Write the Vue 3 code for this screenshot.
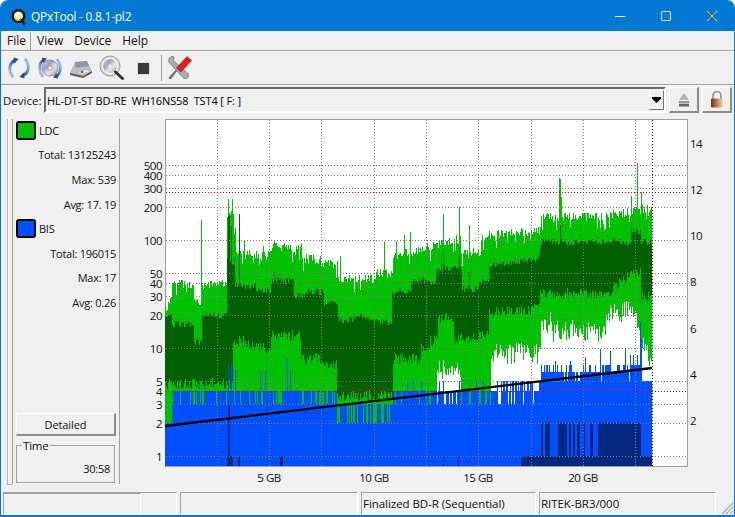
<template>
  <div class="window">
    <div class="titlebar">
      <svg class="app-icon" width="16" height="18" viewBox="0 0 16 18">
        <circle cx="7.5" cy="8" r="7" fill="#111" />
        <circle cx="7.5" cy="8" r="4.6" fill="#f4e8b0" />
        <circle cx="6" cy="6.5" r="2" fill="#fff" />
        <path d="M9 11l5 5.5" stroke="#111" stroke-width="2.4" />
        <path d="M4 11a4 4 0 0 0 6 .5" stroke="#e0a020" stroke-width="1.4" fill="none" />
      </svg>
      <span class="title">QPxTool - 0.8.1-pl2</span>
      <div class="win-buttons">
        <svg width="46" height="30" viewBox="0 0 46 30"><path d="M18 15.5h10" stroke="#fff" /></svg>
        <svg width="46" height="30" viewBox="0 0 46 30"><rect x="18.5" y="10.5" width="9" height="9" rx="1" fill="none" stroke="#fff" /></svg>
        <svg width="46" height="30" viewBox="0 0 46 30"><path d="M18 10l10 10M28 10L18 20" stroke="#fff" /></svg>
      </div>
    </div>

    <div class="menubar">
      <span v-for="(item, i) in menu" :key="item" class="menu-item" :class="{ active: i === 0 }">{{ item }}</span>
    </div>

    <div class="toolbar">
      <!-- refresh -->
      <svg class="tool" width="26" height="26" viewBox="0 0 26 26">
        <defs>
          <linearGradient id="arcA" x1="0.8" y1="0" x2="0.2" y2="1">
            <stop offset="0" stop-color="#1d4f9c" />
            <stop offset="1" stop-color="#b9d4ee" />
          </linearGradient>
          <linearGradient id="arcB" x1="0.2" y1="1" x2="0.8" y2="0">
            <stop offset="0" stop-color="#1d4f9c" />
            <stop offset="1" stop-color="#b9d4ee" />
          </linearGradient>
        </defs>
        <path d="M9 5.500C3 8 1.500 16 7 22.500" fill="none" stroke="url(#arcA)" stroke-width="3" />
        <path d="M7.500 2.500l5 1.500-4 4.500z" fill="#1d4f9c" />
        <path d="M17 20.500C23 18 24.500 10 19 3.500" fill="none" stroke="url(#arcB)" stroke-width="3" />
        <path d="M18.500 23.500l-5-1.500 4-4.500z" fill="#1d4f9c" />
      </svg>
      <!-- disc with arrows -->
      <svg class="tool" width="26" height="26" viewBox="0 0 26 26">
        <defs>
          <linearGradient id="discG" x1="0" y1="0" x2="1" y2="1">
            <stop offset="0" stop-color="#d8d8d8" />
            <stop offset="0.35" stop-color="#a99cc4" />
            <stop offset="0.6" stop-color="#e6e6e6" />
            <stop offset="1" stop-color="#8f8f8f" />
          </linearGradient>
        </defs>
        <circle cx="13" cy="13" r="8" fill="url(#discG)" stroke="#777" stroke-width="0.6" />
        <circle cx="13" cy="13" r="2.2" fill="#f4f4f4" stroke="#666" stroke-width="0.6" />
        <path d="M7 4.500C1.500 8 1 16 6 22" fill="none" stroke="url(#arcA)" stroke-width="2.800" />
        <path d="M5 2.500l5 1-3.500 4.500z" fill="#1d4f9c" />
        <path d="M19 21.500C24.500 18 25 10 20 4" fill="none" stroke="url(#arcB)" stroke-width="2.800" />
        <path d="M21 23.500l-5-1 3.500-4.500z" fill="#1d4f9c" />
      </svg>
      <!-- drive -->
      <svg class="tool" width="26" height="26" viewBox="0 0 26 26">
        <path d="M2 18l5-11 12-1 5 10-9 5z" fill="#b9bcc0" />
        <path d="M7 7l12-1 2 5-13 2z" fill="#8d97a8" />
        <path d="M2 18l13 3 9-5v2l-9 5-13-3z" fill="#56585c" />
        <path d="M10 17l9-2 3 1-8 3z" fill="#e8e8e8" />
        <circle cx="14" cy="17" r="1.300" fill="#666" />
      </svg>
      <!-- scan -->
      <svg class="tool" width="26" height="26" viewBox="0 0 26 26">
        <circle cx="11" cy="11" r="10" fill="#d8d8d8" stroke="#a0a0a0" stroke-width="1" />
        <circle cx="11" cy="11" r="7.500" fill="url(#discG)" stroke="#fff" stroke-width="1" />
        <path d="M7.500 7a5 5 0 0 1 4-1l-1 4z" fill="#7fc4a0" />
        <circle cx="11" cy="11" r="1.600" fill="#eee" />
        <path d="M16.500 17l7 6.500" stroke="#333" stroke-width="3" stroke-linecap="round" />
      </svg>
      <!-- stop -->
      <span class="stop-wrap"><span class="stop"></span></span>
      <span class="tool-sep"></span>
      <!-- tools -->
      <svg class="tool" width="26" height="27" viewBox="0 0 26 27">
        <path d="M5 1.500C2 2 1 5 2 7.500L16 22.500c1 1.500 4 1.500 5 0s1-3.500-.5-4.500L6.500 5.500 7 2z" fill="#a8adb2" stroke="#6a6e72" stroke-width="0.700" />
        <path d="M20 1.500l4.500 4-10.500 11.500-4.500-4z" fill="#e02020" stroke="#9a1010" stroke-width="0.600" />
        <path d="M10.500 15.500L4.500 23.500l-1.500 1-1.500-1.500 1-1.500 6.500-7z" fill="#70757a" />
      </svg>
    </div>

    <div class="device-row">
      <label class="device-label">Device:</label>
      <div class="combo">
        <span class="combo-text">HL-DT-ST BD-RE&nbsp; WH16NS58&nbsp; TST4 [ F: ]</span>
        <span class="combo-btn"><svg width="9" height="6" viewBox="0 0 9 6"><path d="M0 0h9v1.500L4.500 6 0 1.500z" fill="#000" /></svg></span>
      </div>
      <button class="square-btn">
        <svg width="12" height="14" viewBox="0 0 12 14">
          <path d="M6 0l5 7H1z" fill="#b4b4b4" />
          <rect x="1" y="8" width="10" height="2.500" fill="#999" />
          <rect x="1" y="11" width="10" height="2.500" fill="#666" />
        </svg>
      </button>
      <button class="square-btn">
        <svg width="14" height="17" viewBox="0 0 14 17">
          <defs>
            <linearGradient id="lockG" x1="0" y1="0" x2="1" y2="0">
              <stop offset="0" stop-color="#7a2c1c" />
              <stop offset="0.5" stop-color="#b5835a" />
              <stop offset="1" stop-color="#ecd9b8" />
            </linearGradient>
          </defs>
          <path d="M3 8V4.500a4 4 0 0 1 8 0V8" fill="none" stroke="#9a9a9a" stroke-width="1.800" />
          <rect x="1" y="7.500" width="12" height="9" rx="1" fill="url(#lockG)" />
        </svg>
      </button>
    </div>

    <div class="main">
      <div class="rail"></div>
      <div class="panel">
        <template v-for="group in stats" :key="group.name">
          <div class="stat-row legend-row">
            <span class="swatch" :class="group.cls"></span>
            <span>{{ group.name }}</span>
          </div>
          <div v-for="row in group.rows" :key="row" class="stat-row value-row">{{ row }}</div>
        </template>
        <button class="detailed">Detailed</button>
        <fieldset class="time-box">
          <legend>Time</legend>
          <div class="time-value">30:58</div>
        </fieldset>
      </div>

      <svg class="chart" width="614" height="367" viewBox="120 120 614 367">
        <rect x="165.500" y="120.500" width="522" height="347" fill="#fff" stroke="#a0a0a0" />
        <g shape-rendering="crispEdges" fill="none" stroke-width="1">
          <path :d="paths.light" stroke="#00c000" />
          <path :d="paths.dark" stroke="#006000" />
          <path :d="paths.blue" stroke="#0050ff" />
          <path :d="paths.navy" stroke="#002880" />
          <path v-for="y in gridY" :key="'h' + y" :d="`M166 ${y}.5H687`" stroke="#808080" stroke-dasharray="1 2" />
          <path v-for="x in gridX" :key="'v' + x" :d="`M${x}.5 121V467`" stroke="#808080" stroke-dasharray="1 2" />
          <path d="M166 193.500H687M166 392.500H687" stroke="#e00000" stroke-dasharray="1 2" />
          <path d="M652.500 121V467" stroke="#000" stroke-dasharray="1 2" />
        </g>
        <path d="M165 427L652 369" stroke="#000" stroke-width="2.400" fill="none" />
        <g class="axis">
          <text v-for="t in leftTicks" :key="t.label" x="162" :y="t.y + 5" text-anchor="end">{{ t.label }}</text>
          <text v-for="t in rightTicks" :key="t.label" x="690" :y="t.y + 5">{{ t.label }}</text>
          <text v-for="t in bottomTicks" :key="t.label" :x="t.x" y="483" text-anchor="middle">{{ t.label }}</text>
        </g>
      </svg>
    </div>

    <div class="statusbar">
      <div class="cell first"><span class="progress"></span></div>
      <div class="cell"></div>
      <div class="cell">Finalized BD-R (Sequential)</div>
      <div class="cell">RITEK-BR3/000</div>
      <svg class="grip" width="14" height="14" viewBox="0 0 14 14">
        <path d="M13 2L2 13M13 6L6 13M13 10L10 13" stroke="#a8a8a8" stroke-width="1.200" />
      </svg>
    </div>
  </div>
</template>

<script setup>
const menu = ['File', 'View', 'Device', 'Help']

const stats = [
  { name: 'LDC', cls: 'green', rows: ['Total: 13125243', 'Max: 539', 'Avg: 17. 19'] },
  { name: 'BIS', cls: 'blue', rows: ['Total: 196015', 'Max: 17', 'Avg: 0.26'] }
]

// log scale of the left axis, 108px per decade
const logY = (v) => Math.round(457 - 108 * Math.log10(v))

const gridValues = [1, 2, 3, 4, 5, 10, 20, 30, 40, 50, 100, 200, 300, 400, 500]
const gridY = gridValues.map(logY)
const gridX = [217, 269, 321, 374, 426, 478, 531, 583, 635]
const leftTicks = gridValues.map((v) => ({ label: String(v), y: logY(v) }))
const rightTicks = [14, 12, 10, 8, 6, 4, 2].map((v, i) => ({ label: String(v), y: [144, 190, 236, 282, 329, 375, 421][i] }))
const bottomTicks = [
  { label: '5 GB', x: 269 },
  { label: '10 GB', x: 374 },
  { label: '15 GB', x: 478 },
  { label: '20 GB', x: 583 }
]

// small seeded generator so the scan looks the same on every load
let seed = 20240611
const rnd = () => {
  seed = (seed + 0x6d2b79f5) | 0
  let t = Math.imul(seed ^ (seed >>> 15), 1 | seed)
  t = (t + Math.imul(t ^ (t >>> 7), 61 | t)) ^ t
  return ((t ^ (t >>> 14)) >>> 0) / 4294967296
}

const lerp = (pts, x) => {
  for (let i = 1; i < pts.length; i++) {
    if (x <= pts[i][0]) {
      const [x0, y0] = pts[i - 1]
      const [x1, y1] = pts[i]
      return y0 + ((y1 - y0) * (x - x0)) / (x1 - x0 || 1)
    }
  }
  return pts[pts.length - 1][1]
}

const topEdge = [[165, 310], [171, 300], [172, 284], [193, 285], [194, 298], [200, 305], [201, 285], [226, 285], [227, 215], [235, 215], [236, 255], [258, 255], [270, 253], [271, 247], [300, 248], [301, 258], [320, 260], [321, 263], [337, 265], [338, 278], [375, 279], [376, 272], [392, 275], [393, 256], [420, 250], [427, 245], [428, 250], [435, 245], [460, 238], [461, 252], [480, 252], [481, 238], [490, 235], [540, 231], [541, 217], [600, 217], [652, 208]]
const darkTop = [[165, 317], [171, 317], [172, 325], [193, 325], [194, 343], [201, 343], [202, 316], [226, 316], [227, 263], [234, 263], [235, 285], [240, 286], [255, 287], [256, 292], [270, 292], [271, 282], [293, 282], [294, 297], [303, 297], [304, 293], [323, 293], [324, 305], [337, 305], [338, 321], [352, 321], [353, 318], [373, 318], [374, 323], [391, 323], [392, 293], [410, 293], [411, 284], [420, 280], [427, 283], [435, 283], [436, 270], [461, 268], [462, 290], [478, 290], [479, 281], [488, 281], [489, 266], [538, 260], [540, 243], [631, 243], [632, 232], [640, 232], [641, 243], [652, 243]]
const darkBottom = [[165, 385], [232, 385], [233, 340], [260, 348], [270, 350], [271, 335], [300, 336], [301, 360], [320, 360], [321, 365], [336, 365], [337, 397], [392, 397], [393, 360], [420, 360], [421, 350], [437, 338], [438, 318], [453, 318], [454, 340], [478, 340], [479, 335], [488, 335], [489, 313], [538, 310], [540, 295], [605, 295], [635, 274], [640, 272], [641, 298], [652, 298]]
const lightBottom = [[165, 470], [436, 470], [437, 365], [460, 365], [461, 470], [490, 470], [491, 350], [540, 350], [541, 319], [552, 319], [553, 328], [605, 328], [606, 308], [635, 308], [640, 340], [652, 358]]

const spikes = { 201: 221, 228: 200, 232: 200, 234: 235, 239: 215, 244: 241, 263: 247, 274: 241, 301: 244, 340: 257, 384: 243, 396: 242, 404: 236, 410: 233, 443: 215, 459: 208, 469: 226, 559: 179, 560: 180, 561: 198, 631: 197, 637: 164, 641: 193 }
const darkSpikes = { 228: 217, 229: 217, 231: 227, 239: 215, 274: 273, 443: 253, 459: 254, 469: 270, 560: 226, 631: 228 }
const blueSpikes = { 228: 365, 231: 366, 235: 370, 260: 372, 265: 372, 287: 360, 290: 372, 640: 323, 641: 340, 600: 350, 610: 352, 625: 350, 585: 358, 570: 362, 555: 362 }

const blueTop = (x) => {
  const r = rnd()
  if (x < 172) return 424
  if (x < 337) return r < 0.78 ? 392 : 405
  if (x < 393) return r < 0.6 ? 405 : 424
  if (x < 500) return r < 0.75 ? 392 : r < 0.92 ? 405 : 382
  if (x < 541) return r < 0.55 ? 382 : r < 0.85 ? 392 : 405
  if (x < 630) return r < 0.55 ? 373 : r < 0.85 ? 366 : 382
  if (x < 640) return r < 0.6 ? 366 : 356
  return 382
}

const navyUpper = [[541, 543], [545, 550], [558, 567], [569, 571], [573, 575], [577, 580], [583, 585], [590, 593], [598, 641]]
const navyLower = [[227, 233], [238, 240], [280, 283], [443, 444], [458, 459], [521, 652]]

const span = (x, a, b) => (b > a ? `M${x}.5 ${Math.round(a)}V${Math.round(b)}` : '')

const paths = { light: '', dark: '', blue: '', navy: '' }
for (let x = 165; x < 652; x++) {
  const blue = Math.min(blueTop(x), blueSpikes[x] || 999)
  // now and then a column falls well short of its neighbours
  const dip = rnd() < 0.07 ? 10 : 0
  const top = spikes[x] || lerp(topEdge, x) + (rnd() - 0.4) * 9 + dip
  const dTop = darkSpikes[x] || lerp(darkTop, x) + (rnd() - 0.5) * 7
  const dBot = lerp(darkBottom, x) + (rnd() - 0.5) * 12
  const lBot = lerp(lightBottom, x) + (rnd() - 0.3) * 22

  paths.light += span(x, top, dTop) + span(x, dBot, Math.min(lBot, blue))
  paths.dark += span(x, dTop, Math.min(dBot, blue))
  paths.blue += span(x, blue, 467)

  if (navyLower.some(([a, b]) => x >= a && x < b)) paths.navy += span(x, 457, 467)
  if (navyUpper.some(([a, b]) => x >= a && x < b)) paths.navy += span(x, 424, 457)
  if (x === 228 || x === 229) paths.navy += span(x, 405, 457)
}
</script>

<style>
html,
body {
  margin: 0;
  background: #fff;
}
</style>

<style scoped>
.window {
  width: 735px;
  height: 517px;
  box-sizing: border-box;
  position: relative;
  display: flex;
  flex-direction: column;
  background: #f0f0f0;
  border: 1px solid #0078d4;
  border-bottom-width: 2px;
  border-radius: 8px 8px 0 0;
  font-family: "Open Sans", "Noto Sans", sans-serif;
  font-size: 11.5px;
  color: #111;
  overflow: hidden;
}

.titlebar {
  height: 30px;
  flex: none;
  display: flex;
  align-items: center;
  background: #0078d4;
  color: #fff;
  padding-left: 10px;
}

.app-icon {
  margin-top: 1px;
}

.title {
  margin-left: 4px;
  font-size: 12px;
  letter-spacing: -0.25px;
}

.win-buttons {
  margin-left: auto;
  margin-right: -1px;
  display: flex;
}

.win-buttons svg {
  display: block;
}

.menubar {
  height: 19px;
  flex: none;
  display: flex;
  padding-left: 1px;
  border-bottom: 1px solid #a0a0a0;
  box-shadow: 0 1px 0 #fff;
}

.menu-item {
  line-height: 19px;
  padding: 0 5px 0 5px;
  margin-right: 1px;
  font-size: 12px;
  box-sizing: border-box;
}

.menu-item.active {
  border-left: 1px solid #fff;
  border-top: 1px solid #fff;
  border-right: 1px solid #a0a0a0;
  line-height: 17px;
  padding: 0 4px;
}

.toolbar {
  height: 32px;
  flex: none;
  margin-top: 1px;
  display: flex;
  align-items: center;
  padding-left: 5px;
  gap: 5px;
  border-bottom: 1px solid #a0a0a0;
  box-sizing: content-box;
  box-shadow: 0 1px 0 #fff;
}

.tool {
  display: block;
}

.stop-wrap {
  width: 26px;
  height: 26px;
  display: flex;
  align-items: center;
  justify-content: center;
}

.stop {
  width: 11px;
  height: 11px;
  background: #3a3a3a;
  box-shadow: 0 0 1px #777;
}

.tool-sep {
  width: 1px;
  height: 26px;
  background: #a0a0a0;
}

.device-row {
  height: 34px;
  flex: none;
  display: flex;
  align-items: center;
  padding: 0 2px 4px 2px;
  box-sizing: border-box;
}

.device-label {
  width: 41px;
  flex: none;
}

.combo {
  width: 622px;
  height: 26px;
  flex: none;
  box-sizing: border-box;
  display: flex;
  align-items: center;
  border-top: 2px solid #6a6a6a;
  border-left: 2px solid #6a6a6a;
  border-right: 2px solid #fff;
  border-bottom: 2px solid #fff;
  padding-left: 1px;
  position: relative;
}

.combo-text {
  font-size: 11px;
  letter-spacing: -0.15px;
  color: #000;
  white-space: nowrap;
}

.combo-btn {
  margin-left: auto;
  width: 15px;
  height: 20px;
  display: flex;
  align-items: center;
  justify-content: center;
  border-left: 1px solid #fff;
  border-top: 1px solid #fff;
  border-right: 1px solid #777;
  border-bottom: 1px solid #777;
  box-sizing: border-box;
}

.square-btn {
  width: 30px;
  height: 26px;
  margin-left: 3px;
  padding: 0;
  flex: none;
  display: flex;
  align-items: center;
  justify-content: center;
  background: #f0f0f0;
  border: none;
  border-top: 1px solid #fff;
  border-left: 1px solid #fff;
  border-right: 2px solid #8a8a8a;
  border-bottom: 2px solid #8a8a8a;
  box-sizing: border-box;
}

.main {
  height: 367px;
  flex: none;
  display: flex;
  padding-left: 6px;
}

.rail {
  width: 4px;
  height: 365px;
  flex: none;
  border-left: 1px solid #b4b4b4;
  border-bottom: 1px solid #b4b4b4;
  box-shadow: inset 1px 0 0 #fff;
}

.panel {
  width: 108px;
  flex: none;
  box-sizing: border-box;
  height: 365px;
  display: flex;
  flex-direction: column;
  padding: 0 3px 0 3px;
  border-left: 1px solid #a0a0a0;
  border-right: 1px solid #a0a0a0;
  font-size: 11px;
  letter-spacing: -0.25px;
}

.stat-row {
  height: 24.6px;
  flex: none;
  display: flex;
  align-items: center;
}

.stat-row:first-child {
  margin-top: -1px;
}

.legend-row {
  gap: 3px;
}

.value-row {
  justify-content: flex-end;
}

.swatch {
  width: 20px;
  height: 19px;
  box-sizing: border-box;
  border: 2px solid #000;
  border-radius: 3px;
}

.swatch.green {
  background: #00c000;
}

.swatch.blue {
  background: #0050ff;
}

.detailed {
  margin-top: auto;
  height: 23px;
  flex: none;
  width: 100px;
  padding: 0;
  font: inherit;
  letter-spacing: -0.1px;
  color: inherit;
  background: #f0f0f0;
  border: none;
  border-top: 1px solid #fff;
  border-left: 1px solid #fff;
  border-right: 2px solid #8a8a8a;
  border-bottom: 2px solid #8a8a8a;
  box-sizing: border-box;
}

.time-box {
  margin: 2px 0 1px;
  padding: 0 4px 0 4px;
  height: 45px;
  width: 99px;
  box-sizing: border-box;
  border: 1px solid #a0a0a0;
  box-shadow: 1px 1px 0 #fff;
}

.time-box legend {
  padding: 0 1px;
  margin-left: 1px;
  font-size: 11.5px;
  line-height: 15px;
  letter-spacing: -0.2px;
}

.time-value {
  text-align: right;
  margin-top: 8px;
}

.chart {
  display: block;
  flex: none;
}

.axis text {
  font-family: "Open Sans", "Noto Sans", sans-serif;
  font-size: 11.5px;
  letter-spacing: -0.5px;
  fill: #111;
}

.statusbar {
  flex: none;
  margin-top: 6px;
  height: 22px;
  display: grid;
  grid-template-columns: 174px 178px 175px 177px;
  gap: 3px;
  padding-left: 2px;
}

.cell {
  box-sizing: border-box;
  border-top: 1px solid #a0a0a0;
  border-left: 1px solid #a0a0a0;
  border-right: 1px solid #fff;
  border-bottom: 1px solid #fff;
  padding-left: 1px;
  line-height: 21px;
  white-space: nowrap;
  letter-spacing: -0.05px;
}

.cell.first {
  padding: 0;
}

.progress {
  display: block;
  width: 137px;
  height: 100%;
  box-sizing: border-box;
  border-top: 1px solid #a0a0a0;
  border-right: 1px solid #fff;
}

.grip {
  position: absolute;
  right: 0;
  bottom: 0;
}
</style>
